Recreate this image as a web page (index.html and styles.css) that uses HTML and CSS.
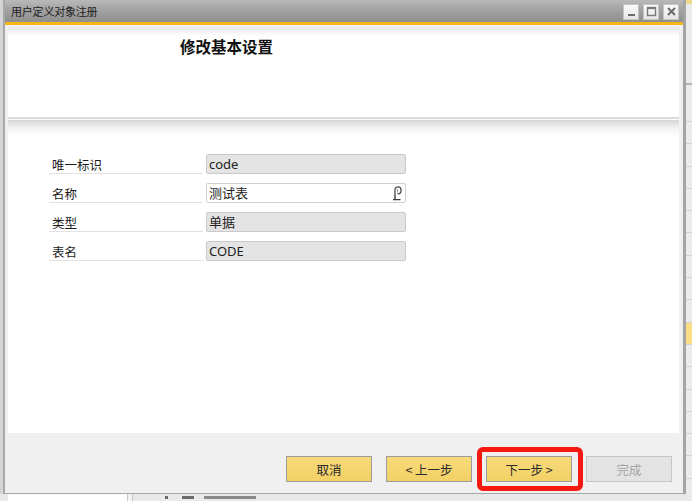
FILE: index.html
```html
<!DOCTYPE html>
<html lang="zh-CN">
<head>
<meta charset="utf-8">
<title>用户定义对象注册</title>
<link rel="stylesheet" href="styles.css">
</head>
<body>
<div class="screen">
  <div class="bg-left"></div>
  <div class="dialog">
    <div class="titlebar">
      <span class="title-text">用户定义对象注册</span>
      <div class="win-btns">
        <span class="win-btn"><svg width="13" height="13" viewBox="0 0 13 13"><rect x="3" y="9" width="7" height="2" fill="#6a6a6a"/></svg></span>
        <span class="win-btn"><svg width="13" height="13" viewBox="0 0 13 13"><rect x="2.5" y="2.5" width="8" height="8" fill="none" stroke="#7a7a7a" stroke-width="1.4"/><rect x="2.5" y="2.5" width="8" height="1.6" fill="#7a7a7a"/></svg></span>
        <span class="win-btn"><svg width="13" height="13" viewBox="0 0 13 13"><path d="M3 3 L10 10 M10 3 L3 10" stroke="#6a6a6a" stroke-width="2"/></svg></span>
      </div>
    </div>
    <div class="accent"></div>
    <div class="body">
      <div class="panel">
        <div class="header">
          <h1 class="heading">修改基本设置</h1>
        </div>
        <div class="divider"></div>
        <div class="form">
          <div class="row">
            <span class="label">唯一标识</span>
            <span class="field readonly">code</span>
          </div>
          <div class="row">
            <span class="label">名称</span>
            <span class="field editable">测试表
              <svg class="field-icon" width="10" height="15" viewBox="0 0 10 15"><path d="M3 9 V3.8 A3 3 0 0 1 9 3.8 V5.5 A2.2 2.2 0 0 1 6.8 7.7 H5.5" fill="none" stroke="#4a4a4a" stroke-width="1.3"/><path d="M5.6 3 V6.5" stroke="#9a9a9a" stroke-width="1"/><path d="M3 9 V13 M1 13.6 H8.5" stroke="#3c3c3c" stroke-width="1.4"/></svg>
            </span>
          </div>
          <div class="row">
            <span class="label">类型</span>
            <span class="field readonly">单据</span>
          </div>
          <div class="row">
            <span class="label">表名</span>
            <span class="field readonly">CODE</span>
          </div>
        </div>
      </div>
      <div class="footer">
        <button class="btn">取消</button>
        <button class="btn">&lt; 上一步</button>
        <button class="btn btn-next">下一步 &gt;<span class="highlight"></span></button>
        <button class="btn btn-disabled">完成</button>
      </div>
    </div>
  </div>
  <div class="bg-right">
    <div class="bg-top"></div>
    <div class="bg-head"></div>
    <div class="bg-row bg-row-tall"></div>
    <div class="bg-row"></div>
    <div class="bg-row"></div>
    <div class="bg-row"></div>
    <div class="bg-row"></div>
    <div class="bg-row"></div>
    <div class="bg-row"></div>
    <div class="bg-row"></div>
    <div class="bg-row"></div>
    <div class="bg-row"></div>
    <div class="bg-row bg-row-active"></div>
    <div class="bg-row"></div>
    <div class="bg-row"></div>
    <div class="bg-row"></div>
    <div class="bg-row"></div>
    <div class="bg-row"></div>
    <div class="bg-row"></div>
  </div>
  <div class="bg-bottom">
    <div class="bb-white"></div>
    <div class="bb-gap"></div>
    <div class="bb-marks">
      <span class="bb-mark bb-dot"></span>
      <span class="bb-mark bb-short"></span>
      <span class="bb-mark bb-long"></span>
    </div>
  </div>
</div>
</body>
</html>
```

FILE: styles.css
```css
* { box-sizing: border-box; }

html, body {
  margin: 0;
  padding: 0;
}

body {
  width: 692px;
  height: 501px;
  overflow: hidden;
  background: #e6e6e6;
  font-family: "Noto Sans", "Noto Sans CJK SC", sans-serif;
  color: #222;
}

.screen {
  display: grid;
  grid-template-columns: 3px 683px 6px;
  grid-template-rows: 494px 7px;
  width: 692px;
  height: 501px;
}

.bg-left {
  background: #d4d4d4;
}

.dialog {
  display: flex;
  flex-direction: column;
  border-left: 2px solid #a8a8a8;
  border-right: 3px solid #a4a4a4;
  border-bottom: 1px solid #a8a8a8;
  background: #f0f0f0;
}

.titlebar {
  height: 22px;
  display: flex;
  align-items: center;
  justify-content: space-between;
  padding: 0 4px 0 6px;
  background: linear-gradient(#b9b9b9, #a2a2a2 45%, #8f8f8f);
}

.title-text {
  font-family: "Noto Sans CJK SC", sans-serif;
  font-size: 11px;
  color: #1c1c1c;
  letter-spacing: -0.2px;
}

.win-btns {
  display: flex;
  gap: 4px;
  padding-top: 1px;
}

.win-btn {
  width: 16px;
  height: 16px;
  display: flex;
  align-items: center;
  justify-content: center;
  background: linear-gradient(#fafafa, #e6e6e6);
  border: 1px solid #c4c4c4;
}

.accent {
  height: 3px;
  background: #f7b519;
}

.body {
  flex: 1;
  display: flex;
  flex-direction: column;
  padding: 2px 4px 0 3px;
}

.panel {
  height: 406px;
  background: #fff;
  display: flex;
  flex-direction: column;
}

.header {
  height: 90px;
  background: linear-gradient(#e4e4e4, #fafafa 7px, #fff 10px);
  padding: 9px 0 0 172px;
}

.heading {
  margin: 0;
  font-family: "Noto Sans CJK SC", sans-serif;
  font-size: 15.5px;
  line-height: 20px;
  font-weight: 700;
  color: #111;
}

.divider {
  height: 3px;
  border-top: 2px solid #dadada;
  background: #fafafa;
}

.form {
  flex: 1;
  background: linear-gradient(#d6d6d6, #f2f2f2 8px, #fff 16px);
  padding: 34px 0 0 41px;
  display: flex;
  flex-direction: column;
  gap: 9px;
}

.row {
  display: flex;
  align-items: flex-end;
  height: 20px;
}

.label {
  width: 154px;
  height: 20px;
  margin-right: 3px;
  padding-left: 3px;
  border-bottom: 1px solid #e2e2e2;
  font-family: "Noto Sans CJK SC", sans-serif;
  font-size: 12.5px;
  line-height: 21px;
  color: #1a1a1a;
}

.field {
  position: relative;
  width: 200px;
  height: 20px;
  padding-left: 2px;
  border: 1px solid #c9c9c9;
  border-radius: 2px;
  font-family: "Noto Sans", "Noto Sans CJK SC", sans-serif;
  font-size: 13px;
  line-height: 19px;
  color: #222;
}

.readonly {
  background: #e4e4e4;
}

.editable {
  background: #fff;
  border-color: #d0d0d0;
}

.field-icon {
  position: absolute;
  right: 3px;
  top: 2px;
}

.footer {
  flex: 1;
  display: flex;
  justify-content: flex-end;
  align-items: flex-start;
  gap: 14px;
  padding: 23px 7px 0 0;
}

.btn {
  position: relative;
  width: 86px;
  height: 26px;
  padding: 0;
  border: 1px solid #9c9c9c;
  background: linear-gradient(#f7da7a, #f2d065);
  font-family: "Noto Sans CJK SC", sans-serif;
  font-size: 12.5px;
  color: #2a2a2a;
}

.btn-disabled {
  background: #e3e3e3;
  border-color: #c6c6c6;
  color: #a6a6a6;
}

.highlight {
  position: absolute;
  left: -10px;
  top: -10px;
  right: -12px;
  bottom: -10px;
  border: 5px solid #f5190f;
  border-radius: 6px;
}

.bg-right {
  display: flex;
  flex-direction: column;
  background: #ebebeb;
  overflow: hidden;
}

.bg-top {
  height: 4px;
  flex: none;
  background: #f0d98a;
}

.bg-head {
  height: 81px;
  flex: none;
  border-bottom: 2px solid #b4b4b4;
}

.bg-row {
  height: 22.3px;
  flex: none;
  border-bottom: 1px solid #d2d2d2;
}

.bg-row-tall {
  height: 37px;
}

.bg-row-active {
  background: #fbde84;
}

.bg-bottom {
  grid-column: 1 / 4;
  display: flex;
  background: #e9e9e9;
  overflow: hidden;
}

.bb-white {
  width: 120px;
  margin-left: 8px;
  background: #fff;
  border-right: 1px solid #c8c8c8;
}

.bb-gap {
  width: 5px;
  border-right: 1px solid #c8c8c8;
  background: #f2f2f2;
}

.bb-marks {
  display: flex;
  align-items: flex-start;
  gap: 10px;
  padding: 2px 0 0 32px;
}

.bb-mark {
  display: block;
  height: 3px;
  background: #6a6a6a;
}

.bb-dot {
  width: 3px;
}

.bb-short {
  width: 12px;
  margin-left: 4px;
}

.bb-long {
  width: 52px;
  background: #8a8a8a;
}
```
